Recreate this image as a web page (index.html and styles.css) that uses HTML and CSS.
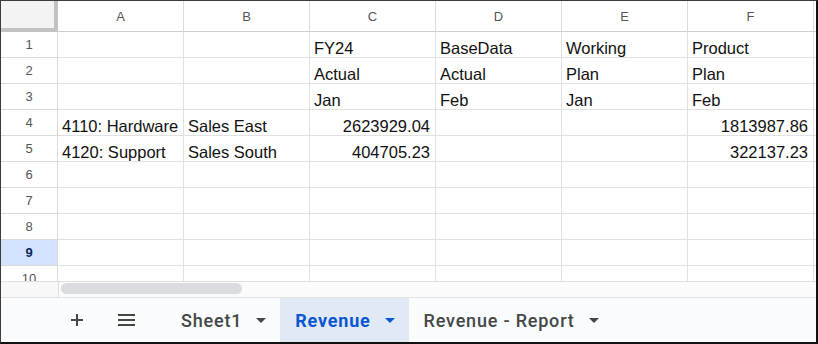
FILE: index.html
```html
<!DOCTYPE html>
<html>
<head>
<link rel="stylesheet" href="styles.css">
</head>
<body>

<div class="sheet">
  <div class="grid">
    <div class="corner"></div>
    <div class="col-head">A</div>
    <div class="col-head">B</div>
    <div class="col-head">C</div>
    <div class="col-head">D</div>
    <div class="col-head">E</div>
    <div class="col-head">F</div>
    <div class="col-head edge"></div>

    <div class="row-head">1</div>
    <div class="cell"></div><div class="cell"></div>
    <div class="cell">FY24</div><div class="cell">BaseData</div><div class="cell">Working</div><div class="cell">Product</div>
    <div class="cell edge"></div>

    <div class="row-head">2</div>
    <div class="cell"></div><div class="cell"></div>
    <div class="cell">Actual</div><div class="cell">Actual</div><div class="cell">Plan</div><div class="cell">Plan</div>
    <div class="cell edge"></div>

    <div class="row-head">3</div>
    <div class="cell"></div><div class="cell"></div>
    <div class="cell">Jan</div><div class="cell">Feb</div><div class="cell">Jan</div><div class="cell">Feb</div>
    <div class="cell edge"></div>

    <div class="row-head">4</div>
    <div class="cell">4110: Hardware</div><div class="cell">Sales East</div>
    <div class="cell num">2623929.04</div><div class="cell"></div><div class="cell"></div><div class="cell num">1813987.86</div>
    <div class="cell edge"></div>

    <div class="row-head">5</div>
    <div class="cell">4120: Support</div><div class="cell">Sales South</div>
    <div class="cell num">404705.23</div><div class="cell"></div><div class="cell"></div><div class="cell num">322137.23</div>
    <div class="cell edge"></div>

    <div class="row-head">6</div>
    <div class="cell"></div><div class="cell"></div><div class="cell"></div><div class="cell"></div><div class="cell"></div><div class="cell"></div>
    <div class="cell edge"></div>

    <div class="row-head">7</div>
    <div class="cell"></div><div class="cell"></div><div class="cell"></div><div class="cell"></div><div class="cell"></div><div class="cell"></div>
    <div class="cell edge"></div>

    <div class="row-head">8</div>
    <div class="cell"></div><div class="cell"></div><div class="cell"></div><div class="cell"></div><div class="cell"></div><div class="cell"></div>
    <div class="cell edge"></div>

    <div class="row-head selected">9</div>
    <div class="cell"></div><div class="cell"></div><div class="cell"></div><div class="cell"></div><div class="cell"></div><div class="cell"></div>
    <div class="cell edge"></div>

    <div class="row-head">10</div>
    <div class="cell"></div><div class="cell"></div><div class="cell"></div><div class="cell"></div><div class="cell"></div><div class="cell"></div>
    <div class="cell edge"></div>
  </div>

  <div class="scroll-row">
    <div class="scroll-corner"></div>
    <div class="scroll-track"><div class="scroll-thumb"></div></div>
  </div>

  <div class="tab-bar">
    <button class="icon-button add-button" title="Add sheet">
      <svg width="12" height="12" viewBox="0 0 12 12"><path d="M6 0v12M0 6h12" stroke="#444746" stroke-width="2" fill="none"/></svg>
    </button>
    <button class="icon-button menu-button" title="All sheets">
      <svg width="17" height="12" viewBox="0 0 17 12"><path d="M0 1h17M0 6h17M0 11h17" stroke="#444746" stroke-width="2" fill="none"/></svg>
    </button>
    <div class="tab first-tab">Sheet1 <span class="caret"></span></div>
    <div class="tab active">Revenue <span class="caret"></span></div>
    <div class="tab">Revenue - Report <span class="caret"></span></div>
  </div>
</div>

</body>
</html>
```

FILE: styles.css
```css
body {
  margin: 0;
  font-family: "Liberation Sans", Arial, sans-serif;
}

.sheet {
  width: 818px;
  height: 344px;
  box-sizing: border-box;
  border-top: 1px solid #3c3c3c;
  border-left: 1px solid #3c3c3c;
  border-right: 2px solid #111;
  border-bottom: 2px solid #111;
  background: white;
  overflow: hidden;
}

.grid {
  display: grid;
  grid-template-columns: 57px repeat(6, 126px) 1fr;
  grid-template-rows: 31px;
  grid-auto-rows: 26px;
  height: 280px;
  overflow: hidden;
}

.corner {
  background: #f3f3f3;
  border-right: 4px solid #c2c2c2;
  border-bottom: 4px solid #c2c2c2;
}

.col-head,
.row-head {
  display: flex;
  align-items: center;
  justify-content: center;
  color: #555;
  font-size: 13px;
  border-right: 1px solid #dadada;
  border-bottom: 1px solid #dadada;
}

.col-head {
  border-bottom-color: #cfcfcf;
}

.row-head.selected {
  background: #d3e3fd;
  color: #0a2a5e;
  font-weight: bold;
}

.cell {
  box-sizing: border-box;
  padding: 6px 5px 0 4px;
  line-height: 20px;
  font-size: 16.5px;
  color: #111;
  white-space: nowrap;
  overflow: hidden;
  border-right: 1px solid #e1e1e1;
  border-bottom: 1px solid #e1e1e1;
}

.cell.num {
  text-align: right;
}

.edge {
  border-right: none;
}

.scroll-row {
  display: flex;
  height: 17px;
  box-sizing: border-box;
  border-top: 1px solid #dedede;
  border-bottom: 1px solid #e3e3e3;
  background: #f8f8f8;
}

.scroll-corner {
  width: 57px;
  border-right: 1px solid #dedede;
}

.scroll-track {
  flex-grow: 1;
  padding: 1px 2px;
  background: #fbfbfb;
}

.scroll-thumb {
  width: 181px;
  height: 11px;
  border-radius: 6px;
  background: #dadce0;
}

.tab-bar {
  display: flex;
  align-items: stretch;
  height: 44px;
  background: #f9fbfd;
  font-family: Roboto, "Liberation Sans", sans-serif;
}

.icon-button {
  width: 36px;
  border: none;
  background: none;
  padding: 0;
  display: flex;
  align-items: center;
  justify-content: center;
  cursor: pointer;
}

.add-button {
  margin-left: 58px;
}

.menu-button {
  margin-left: 13px;
}

.tab {
  display: flex;
  align-items: center;
  gap: 14px;
  padding: 0 14px 0 15px;
  font-size: 18px;
  font-weight: 500;
  letter-spacing: 0.8px;
  color: #444746;
  white-space: nowrap;
}

.first-tab {
  margin-left: 22px;
}

.tab.active {
  background: #e1e9f7;
  color: #0b57d0;
  font-weight: bold;
}

.caret {
  width: 0;
  height: 0;
  border-left: 5px solid transparent;
  border-right: 5px solid transparent;
  border-top: 5px solid #444746;
}

.tab.active .caret {
  border-top-color: #0b57d0;
}
```
